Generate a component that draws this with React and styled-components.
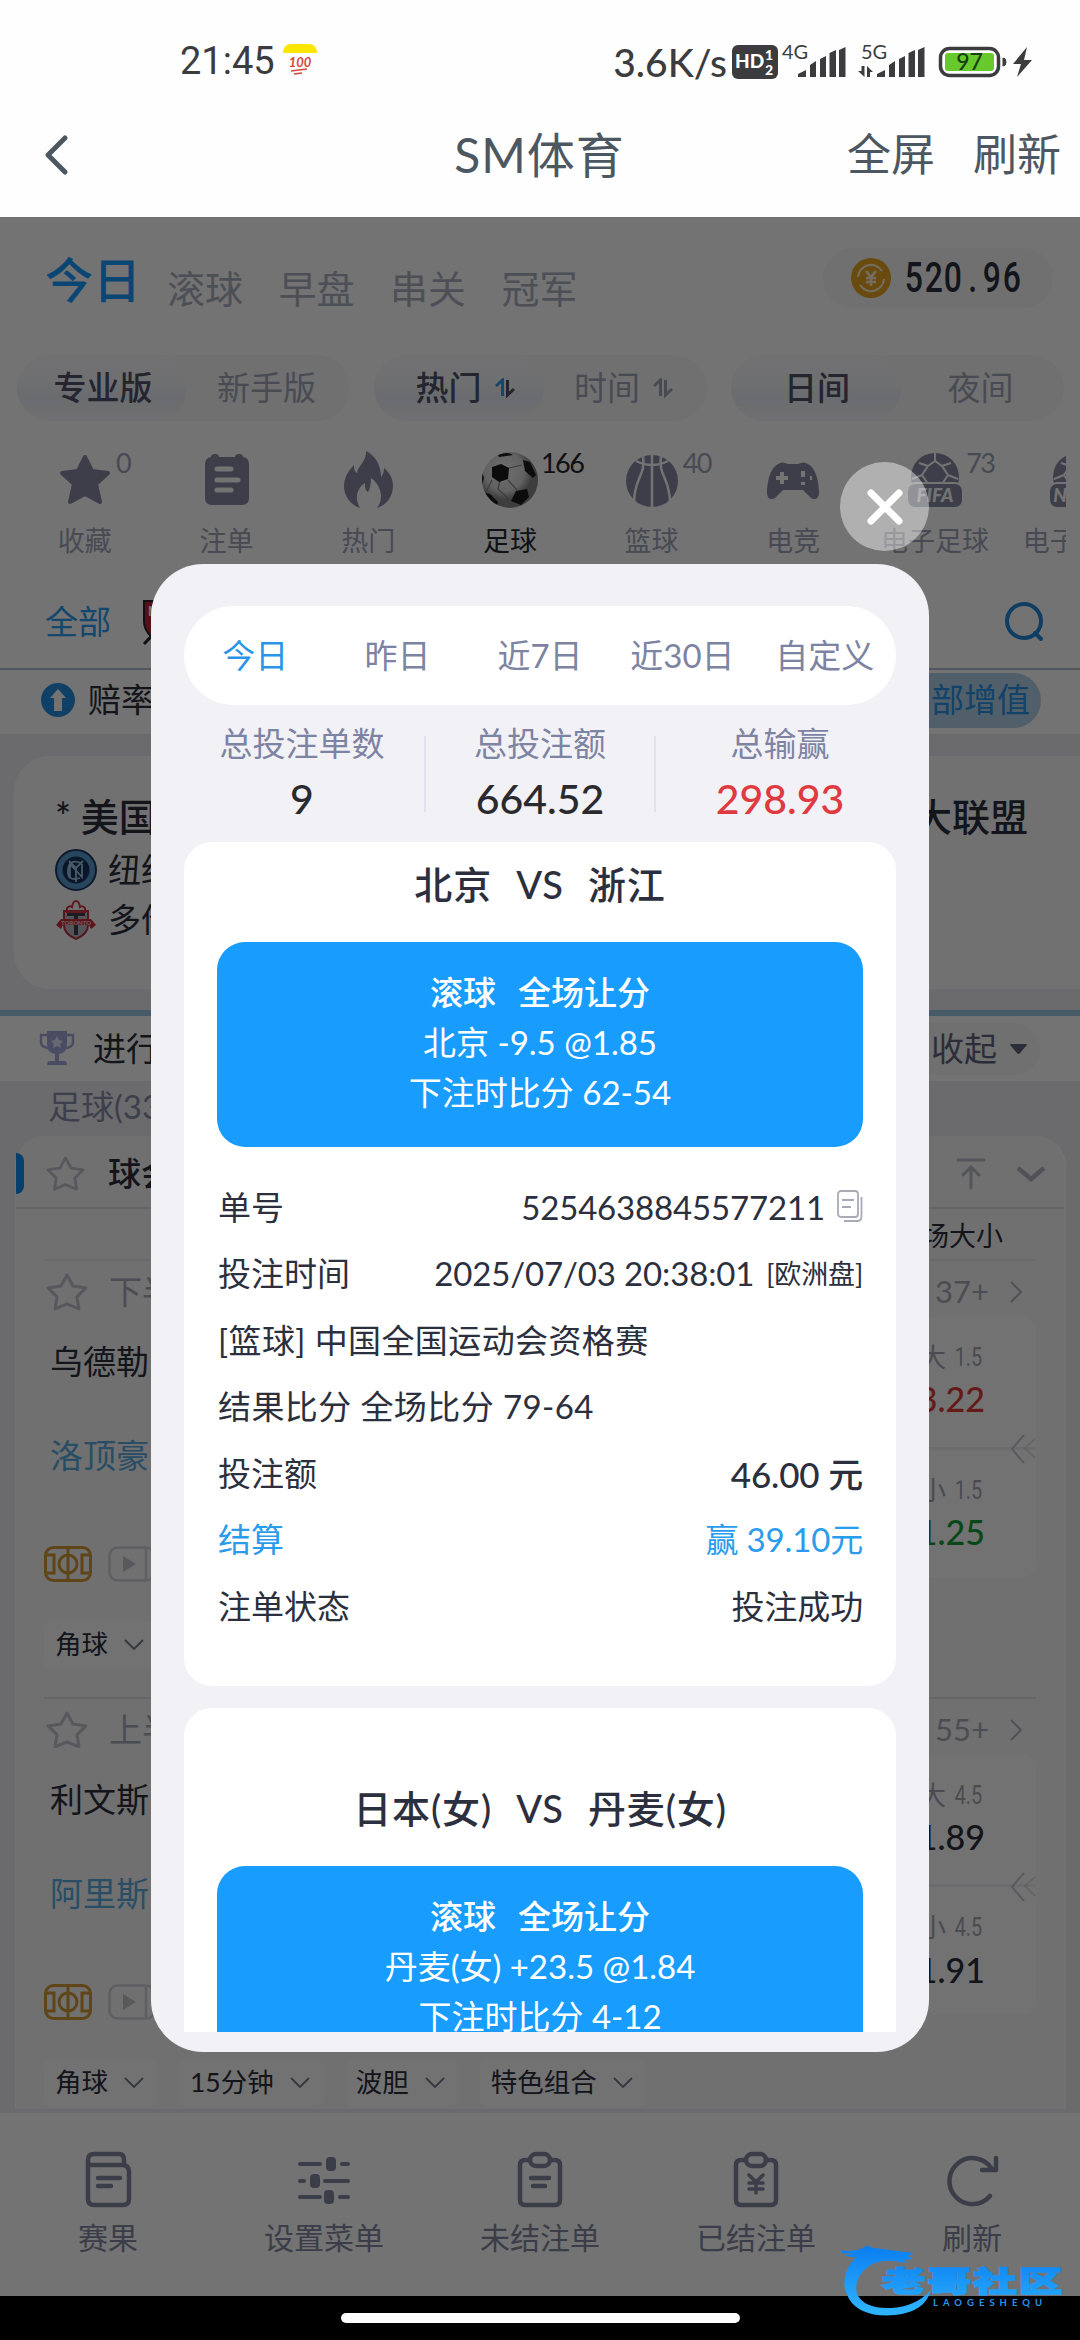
import React from 'react';
import styled, { createGlobalStyle, css } from 'styled-components';

const GlobalStyle = createGlobalStyle`
  * {
    box-sizing: border-box;
  }

  body {
    margin: 0;
    background: #000;
    font-family: Lato, 'Noto Sans CJK SC', sans-serif;
    font-size: 33px;
    line-height: 1.2;
    color: #2c2f3d;
  }
`;

const Screen = styled.div`
  position: relative;
  display: flex;
  flex-direction: column;
  width: 1080px;
  height: 2340px;
  overflow: hidden;
  white-space: nowrap;
`;

// Status bar and title bar
const StatusBar = styled.div`
  display: flex;
  align-items: center;
  justify-content: space-between;
  height: 108px;
  padding: 16px 47px 0 180px;
  background: #fefefe;
  color: #3c3c3e;
  font-size: 39px;
  font-weight: 500;
`;

const StatusGroup = styled.div`
  display: flex;
  align-items: center;
`;

const Clock = styled.span`
  font-family: Roboto, sans-serif;
  font-size: 38px;
  font-weight: 400;
`;

const TitleBar = styled.div`
  display: grid;
  grid-template-columns: 1fr auto 1fr;
  align-items: center;
  height: 109px;
  padding: 0 19px 16px 18px;
  background: #fefefe;
  color: #4d5761;
`;

const PageTitle = styled.div`
  font-size: 48px;
  letter-spacing: 1px;
`;

const TitleActions = styled.div`
  display: flex;
  justify-content: flex-end;
  gap: 38px;
  font-size: 44px;
`;

// Main page
const Page = styled.div`
  display: flex;
  flex-direction: column;
  height: 2079px;
  background: #fff;
`;

const TopTabs = styled.div`
  display: flex;
  align-items: center;
  height: 126px;
  padding: 0 27px 0 45px;
`;

const TopTab = styled.div`
  margin-right: 35.5px;
  padding-top: 18px;
  font-size: 38px;
  color: #acb0c2;

  ${({ $active }) =>
    $active &&
    css`
      margin-right: 26px;
      padding-top: 0;
      font-size: 48px;
      font-weight: 500;
      color: #179cff;
    `}
`;

const Balance = styled.div`
  display: flex;
  align-items: center;
  width: 230px;
  height: 60px;
  margin: 0 0 4px auto;
  padding-left: 28px;
  border-radius: 30px;
  background: #f9f9fb;
`;

const BalanceDigits = styled.div`
  display: flex;
  margin-left: 13px;
  font-family: Roboto, sans-serif;
  font-size: 42px;
  font-weight: 500;
  color: #2c2f3d;
`;

const Digit = styled.span`
  display: flex;
  justify-content: center;
  width: 19.6px;
  transform: scaleX(0.76);
`;

const Segments = styled.div`
  display: flex;
  gap: 24px;
  height: 91px;
  padding: 12px 16px 13px 17px;
`;

const Segment = styled.div`
  display: flex;
  flex: 1;
  border-radius: 33px;
  background: #f8f8fa;
`;

const SegmentOption = styled.div`
  display: flex;
  flex: 1;
  align-items: center;
  justify-content: center;
  gap: 13px;
  padding-right: 4px;
  border-radius: 33px;
  color: #a2a7b8;

  ${({ $active }) =>
    $active &&
    css`
      flex: 0 0 170px;
      padding-right: 0;
      padding-left: ${({ $sortable }) => ($sortable ? 12 : 2)}px;
      color: #505368;
      font-weight: 500;
      background: linear-gradient(#fbfbfd 0%, #f7f8fb 40%, #eceff8 62%, #f2f3f9 80%, #f9f9fb 100%);
    `}
`;

const Sports = styled.div`
  display: flex;
  width: 1066px;
  height: 128px;
  padding-left: 14px;
  overflow: hidden;
`;

const Sport = styled.div`
  position: relative;
  display: flex;
  flex: none;
  flex-direction: column;
  align-items: center;
  width: 141.7px;
  padding-top: 17px;
  font-size: 27px;
  color: ${({ $active }) => ($active ? '#24262e' : '#a0a4b8')};
`;

const SportCount = styled.span`
  position: absolute;
  left: 102px;
  top: 13px;
  letter-spacing: -1.6px;
`;

const SportLabel = styled.div`
  margin-top: 16px;
`;

const LeagueBar = styled.div`
  display: flex;
  align-items: center;
  height: 108px;
  padding: 14px 35px 0 45px;
  border-bottom: 2px solid #b4bfcf;
  color: #2a9df0;
`;

const MlsLogo = styled.svg`
  margin: 0 auto 0 31px;
`;

const Notice = styled.div`
  display: flex;
  align-items: center;
  height: 64px;
  padding: 0 39px 4px 41px;
`;

const NoticeText = styled.span`
  margin: 0 auto 0 13px;
`;

const BoostPill = styled.div`
  display: flex;
  align-items: center;
  justify-content: flex-end;
  width: 190px;
  height: 55px;
  padding-right: 11px;
  border-radius: 28px;
  background: #b4d2ea;
  color: #2a93e6;
`;

const Body = styled.div`
  display: flex;
  flex: 1;
  flex-direction: column;
  min-height: 0;
  background: #eeeef3;
`;

const PromoCard = styled.div`
  display: flex;
  flex: none;
  flex-direction: column;
  height: 233px;
  margin: 22px 0 0 14px;
  padding: 33px 52px 0 41px;
  border-radius: 36px 0 0 36px;
  background: #fbfbfc;
`;

const PromoTitle = styled.div`
  display: flex;
  align-items: center;
  justify-content: space-between;
  height: 56px;
  font-size: 38px;
  font-weight: 500;
`;

const PromoTeam = styled.div`
  display: flex;
  align-items: center;
  gap: 11px;
  height: 50px;
`;

const LiveBar = styled.div`
  display: flex;
  flex: none;
  align-items: center;
  height: 71px;
  margin-top: 21px;
  padding: 0 40px 0 39px;
  border-top: 6px solid #9cc8e6;
  background: #fff;
`;

const LiveText = styled.span`
  margin: 0 auto 0 18px;
`;

const CollapsePill = styled.div`
  display: flex;
  align-items: center;
  gap: 12px;
  height: 52px;
  padding: 0 12px 0 40px;
  border-radius: 26px;
  background: #f8f8fa;
  color: #60647c;
`;

const GroupTitle = styled.div`
  display: flex;
  flex: none;
  align-items: center;
  height: 55px;
  padding: 0 0 4px 48px;
  color: #888ca8;
`;

const MatchCard = styled.div`
  display: flex;
  flex: none;
  flex-direction: column;
  height: 973px;
  margin: 0 14px 0 15px;
  border-left: 1px solid #fdfdff;
  border-right: 2px solid #fdfdff;
  border-radius: 30px 30px 0 0;
  background: #f8f8f9;
`;

const MatchCardHead = styled.div`
  display: flex;
  flex: none;
  align-items: center;
  height: 73px;
  padding: 4px 18px 0 0;
  border-bottom: 2px solid #e2e2e8;
  font-weight: 500;
`;

const LeagueMark = styled.div`
  width: 8px;
  height: 41px;
  margin-right: 22px;
  border-radius: 0 8px 8px 0;
  background: #0d8df0;
`;

const LeagueName = styled.span`
  margin: 0 auto 0 23px;
`;

const HeadIcons = styled.div`
  display: flex;
  align-items: center;
  gap: 30px;
`;

const ColumnTitle = styled.div`
  flex: none;
  height: 52px;
  margin: 0 28px;
  padding: 11px 33px 0 0;
  border-bottom: 2px solid #e8e8ee;
  font-size: 27px;
  line-height: 32px;
  text-align: right;
`;

const Match = styled.div`
  display: flex;
  flex: none;
  flex-direction: column;
  height: 435.5px;
  margin: 0 28px;

  & + & {
    border-top: 2px solid #e2e2e8;
  }
`;

const MatchHead = styled.div`
  display: flex;
  align-items: center;
  height: 56px;
  padding: 6px 14px 0 2px;
  color: #a8abb8;
`;

const MatchPeriod = styled.span`
  margin: 0 auto 0 21px;
`;

const MoreCount = styled.span`
  margin-right: 21px;
  font-size: 31px;
`;

const MatchBody = styled.div`
  display: flex;
  flex: none;
  justify-content: space-between;
  height: 304px;
`;

const Teams = styled.div`
  display: flex;
  flex-direction: column;
  padding: 25px 0 0 6px;
`;

const Team = styled.div`
  height: 94px;
  color: ${({ $away }) => ($away ? '#5cacdf' : '#2c2f3d')};
`;

const MediaIcons = styled.div`
  display: flex;
  gap: 16px;
  margin-left: -6px;
  padding-top: 16px;
`;

const OddsBox = styled.div`
  position: relative;
  display: flex;
  flex-direction: column;
  width: 170px;
  height: 260px;
  border-radius: 14px;
  background: #fdfdfe;
`;

const Odds = styled.div`
  display: flex;
  flex-direction: column;
  align-items: flex-end;
  height: 131px;
  padding: 25px 51px 0 0;
  color: #a3a6b4;
  font-size: 26px;

  & + & {
    border-top: 3px solid #efeff3;
  }
`;

const OddsLine = styled.span`
  display: flex;
  margin-right: 3px;
`;

const OddsLimit = styled.span`
  font-family: Roboto, sans-serif;
  transform: scaleX(0.76);
  transform-origin: right;
`;

const OddsValue = styled.span`
  margin-top: 6px;
  font-size: 34px;
  font-weight: 500;
  color: ${({ $color }) => $color || '#2c2f3d'};
`;

const SwipeHint = styled.svg`
  position: absolute;
  right: 0;
  top: 116px;
`;

const Chips = styled.div`
  display: flex;
  gap: 22px;
`;

const Chip = styled.div`
  display: flex;
  align-items: center;
  gap: 16px;
  height: 48px;
  padding: 0 13px 0 11px;
  border-radius: 8px;
  background: #fdfdfe;
  font-size: 26.5px;
`;

const BottomNav = styled.div`
  display: flex;
  flex: none;
  height: 183px;
  background: #fff;
`;

const NavItem = styled.div`
  display: flex;
  flex: 1;
  flex-direction: column;
  align-items: center;
  gap: 10px;
  padding-top: 38px;
  font-size: 30px;
  color: #84889f;
`;

const HomeBar = styled.div`
  display: flex;
  align-items: center;
  justify-content: center;
  height: 44px;
  background: #000;
`;

const HomeIndicator = styled.div`
  width: 399px;
  height: 10px;
  border-radius: 5px;
  background: #fff;
`;

// Dialog
const Overlay = styled.div`
  position: absolute;
  inset: 217px 0 44px;
  background: rgba(0, 0, 0, 0.55);
`;

const CloseButton = styled.button`
  position: absolute;
  left: 840px;
  top: 462px;
  display: flex;
  align-items: center;
  justify-content: center;
  width: 89px;
  height: 89px;
  padding: 0;
  border: 0;
  border-radius: 50%;
  background: rgba(255, 255, 255, 0.44);
`;

const Dialog = styled.div`
  position: absolute;
  left: 151px;
  top: 564px;
  display: flex;
  flex-direction: column;
  width: 778px;
  height: 1488px;
  padding: 42px 33px 20px;
  border-radius: 52px;
  background: #f1f1f6;
`;

const RangeTabs = styled.div`
  display: flex;
  flex: none;
  height: 99px;
  border-radius: 50px;
  background: #fff;
`;

const RangeTab = styled.div`
  display: flex;
  flex: 1;
  align-items: center;
  justify-content: center;
  color: ${({ $active }) => ($active ? '#2a95e8' : '#7d83a3')};
`;

const Stats = styled.div`
  display: grid;
  flex: none;
  grid-template-columns: 240px 230px 242px;
  align-items: center;
  height: 137px;
`;

const Stat = styled.div`
  display: flex;
  flex-direction: column;
  align-items: center;
  justify-content: center;
  gap: 11px;
  height: 76px;

  & + & {
    border-left: 2px solid #e2e2ee;
  }

  &:first-child {
    padding-right: 4px;
  }

  &:last-child {
    padding-left: 8px;
  }
`;

const StatLabel = styled.div`
  color: #7d83a3;
`;

const StatValue = styled.div`
  font-size: 41px;
  font-weight: 500;
  color: ${({ $color }) => $color || '#2a2a2e'};
`;

const BetList = styled.div`
  display: flex;
  flex: 1;
  flex-direction: column;
  gap: 22px;
  min-height: 0;
  overflow: hidden;
`;

const BetCard = styled.div`
  flex: none;
  height: 844px;
  padding: ${({ $spaced }) => ($spaced ? 58 : 0)}px 33px 0;
  border-radius: 28px;
  background: #fff;
`;

const BetTitle = styled.div`
  display: flex;
  align-items: center;
  justify-content: center;
  gap: 24px;
  height: 100px;
  padding-bottom: 14px;
  font-size: 38px;
  font-weight: 500;
  letter-spacing: 0.9px;
`;

const Pick = styled.div`
  display: flex;
  flex-direction: column;
  align-items: center;
  height: 205px;
  padding-top: 25px;
  border-radius: 28px;
  background: #189dff;
  color: #fff;
  line-height: 50px;
`;

const PickHead = styled.div`
  display: flex;
  gap: 22px;
  font-weight: 500;
`;

const Rows = styled.div`
  padding: 27px 0 0 1px;
`;

const Row = styled.div`
  display: flex;
  align-items: center;
  justify-content: space-between;
  height: 66.6px;
  letter-spacing: ${({ $wide }) => ($wide ? 0.4 : 0)}px;
  color: ${({ $win }) => ($win ? '#2a9ceb' : 'inherit')};
`;

const RowValue = styled.span`
  display: flex;
  align-items: center;
  gap: 12px;
  font-size: ${({ $strong }) => ($strong ? 35 : 33)}px;
  font-weight: ${({ $strong }) => ($strong ? 500 : 400)};
  letter-spacing: -0.15px;
`;

const Market = styled.span`
  font-size: 27px;
`;

const Watermark = styled.svg`
  position: absolute;
  left: 830px;
  top: 2230px;
`;

const SignalBars = ({ data }) => (
  <svg width="67" height="50" viewBox="0 0 67 50" fill="#3c3c3e">
    <text x="3" y="22" fontSize="20" fontFamily="Lato, sans-serif" fontWeight="400">
      {data ? '5G' : '4G'}
    </text>
    <path d="M19 40v-3l8-4v7zM31 40V28l6-4v16zM41 40V22l6-3v21zM50.500 40V16l6.500-3v27zM60 40V13l6.500-3v30z" />
    {data && <path d="M0 34h3.500V29h3v11zM9 40V29l6 6h-3v5z" />}
  </svg>
);

const BackIcon = () => (
  <svg width="52" height="44" viewBox="-24 0 52 44" fill="none" stroke="#4d5761" strokeWidth="5" strokeLinecap="round" strokeLinejoin="round">
    <path d="M23 5 6 22l17 17" />
  </svg>
);

const SortIcon = ({ active }) => (
  <svg width="20" height="20" viewBox="0 0 20 20" fill="none" strokeWidth="3">
    <path d="M1 8 7.500 2v16" stroke={active ? '#2a9df0' : '#a2a7b8'} />
    <path d="M12.500 2v15L19 11" stroke={active ? '#505368' : '#a2a7b8'} />
  </svg>
);

const CoinIcon = () => (
  <svg width="40" height="40" viewBox="0 0 40 40">
    <circle cx="20" cy="20" r="20" fill="#e8a623" />
    <g fill="none" stroke="#fff3d6" strokeWidth="2">
      <path d="M7 19a13 13 0 0 1 24-6M33 21a13 13 0 0 1-24 6" />
      <path d="m15 13 5 6 5-6M20 19v9M15 20h10M15 24h10" strokeWidth="2.600" />
    </g>
  </svg>
);

const sportColor = '#888ba4';

const SportIcon = ({ type }) => (
  <svg width="58" height="58" viewBox="0 0 58 58" fill={sportColor}>
    {type === 'star' && (
      <path stroke={sportColor} strokeWidth="4" strokeLinejoin="round" d="m29 6 7 14 16 2-12 11 4 18-15-8-15 8 4-18L6 22l16-2z" />
    )}
    {type === 'orders' && (
      <>
        <path d="M13 6q0-3 4-3t4 3h16q0-3 4-3t4 3q6 1 6 7v34q0 7-7 7H14q-7 0-7-7V13q0-6 6-7z" />
        <path d="M19 18h14M19 29h21M19 39h14" stroke="#fff" strokeWidth="5" strokeLinecap="round" />
      </>
    )}
    {type === 'fire' && (
      <path d="M27 0c1 10-9 16-9 22-3-2-3-5-3-8C8 21 5 28 5 35c0 11 7 19 16 22-6-10-3-20 5-25 0 4 0 7 3 9 2-3 3-8 3-14 9 6 14 20 6 30 10-3 16-12 16-22 0-8-4-14-9-18 0 4-1 7-3 9C42 15 37 5 27 0z" />
    )}
    {type === 'football' && (
      <>
        <defs>
          <radialGradient id="ball" cx="40%" cy="35%">
            <stop offset="0" stopColor="#f6f6f6" />
            <stop offset="0.7" stopColor="#d8d8d8" />
            <stop offset="1" stopColor="#888" />
          </radialGradient>
          <clipPath id="ballClip">
            <circle cx="29" cy="29" r="28" />
          </clipPath>
        </defs>
        <circle cx="29" cy="29" r="28" fill="url(#ball)" />
        <g clipPath="url(#ballClip)">
          <g fill="none" stroke="#888" strokeWidth="1.200">
            <path d="M27 29l9 10M28 17l13-3M51 24l3 14-8 4M11 29l-6 12M19 30l-2 8 12 11" />
          </g>
          <path fill="#1b1b1b" d="m11 16 9-3 8 4-1 11-9 3-7-5zM42 9l7 2 6 13-3 3-8-7zM35 40l11-2 2 8-8 8-10-4zM4 42l5 1 8 8-1 6zM17 4q10-4 15 0l-14 2zM1 20l2 7-2 7z" />
        </g>
      </>
    )}
    {type === 'basketball' && (
      <>
        <circle cx="29" cy="30" r="26" />
        <g fill="none" stroke="#fff" strokeWidth="2.500">
          <path d="M29 3v54M20 4c3 22-9 22-9 48M38 4c-3 22 9 22 9 48M13 10q16 8 32 0" />
        </g>
      </>
    )}
    {type === 'gamepad' && (
      <>
        <path d="M14 13q4-3 10 0h10q6-3 10 0c8 4 11 18 11 29 0 6-5 8-9 4l-7-7H19l-7 7c-4 4-9 2-9-4 0-11 3-25 11-29z" />
        <path d="M18 21v12M12 27h12M39 20v6M39 31v3M46 27h2" stroke="#fff" strokeWidth="4" />
      </>
    )}
    {(type === 'fifa' || type === 'nba') && (
      <>
        <circle cx="29" cy="26" r="24" />
        <path d="m22 15 7-5 7 5 6 9-6 9H22l-6-9zM29 10V2M16 24 6 28M42 24l10 4M22 15l-9-3M36 15l9-3" fill="none" stroke="#fff" strokeWidth="2" />
        <rect x="1" y="32" width="56" height="25" rx="8" stroke="#fff" strokeWidth="2" />
        <text x={type === 'fifa' ? 29 : 24} y="51" fontSize="19" fontWeight="900" fontStyle="italic" textAnchor="middle" fill="#fff" fontFamily="Lato, sans-serif">
          {type === 'fifa' ? 'FIFA' : 'NBA'}
        </text>
      </>
    )}
  </svg>
);

const StarOutline = ({ size = 42 }) => (
  <svg width={size} height={size * 0.9} viewBox="0 0 42 38" fill="none" stroke="#c0c2ce" strokeWidth="3" strokeLinejoin="round">
    <path d="m21 2 6 11 13 2-9 9 2 12-12-5-12 5 2-12-9-9 13-2z" />
  </svg>
);

const SmallChevron = () => (
  <svg width="20" height="12" viewBox="0 0 20 12" fill="none" stroke="#777b8a" strokeWidth="1.800">
    <path d="m1 1 9 9 9-9" />
  </svg>
);

const PitchIcon = () => (
  <svg width="48" height="36" viewBox="0 0 48 36" fill="none" stroke="#d39a36" strokeWidth="3">
    <rect x="1.500" y="1.500" width="45" height="33" rx="8" />
    <path d="M24 1v34M2 9h8v18H2M46 9h-8v18h8" />
    <circle cx="24" cy="18" r="9" />
  </svg>
);

const VideoIcon = () => (
  <svg width="48" height="36" viewBox="0 0 48 36" fill="none" stroke="#d2d3d9" strokeWidth="2.500">
    <rect x="1.500" y="1.500" width="45" height="33" rx="8" />
    <path d="M38 2v32" />
    <path d="m15 10 13 8-13 8z" fill="#c4c5cc" stroke="none" />
  </svg>
);

const CopyIcon = () => (
  <svg width="26" height="34" viewBox="0 0 26 34" fill="none" stroke="#a8abb5" strokeWidth="1.800">
    <rect x="1" y="1" width="20" height="26" rx="3" />
    <path d="M24.500 7v19q0 5-4 5H7M5 10h12M5 17h9" />
  </svg>
);

const NavIcon = ({ type }) => (
  <svg width="54" height="58" viewBox="0 0 54 58" fill="none" stroke="#84889f" strokeWidth="4.500" strokeLinecap="round" strokeLinejoin="round">
    {type === 'results' && (
      <path d="M7 14V9q0-6 6-6h25q5 0 5 6v5H10q-3 0-3-3v37q0 6 6 6h29q6 0 6-6V21q0-7-7-7M17 27h22M17 35h13" />
    )}
    {type === 'settings' && (
      <>
        <path d="M3 13h20M45 13h6M3 30h4M28 30h23M3 46h20M43 46h8" strokeWidth="4" />
        <g fill="#84889f" stroke="none">
          <rect x="29" y="6" width="10" height="14" rx="4" />
          <rect x="13" y="23" width="10" height="14" rx="4" />
          <rect x="27" y="39" width="10" height="14" rx="4" />
        </g>
      </>
    )}
    {(type === 'open' || type === 'settled') && (
      <>
        <path d="M17 9h-5q-5 0-5 5v35q0 5 5 5h30q5 0 5-5V14q0-5-5-5h-5" />
        <rect x="17" y="3" width="20" height="12" rx="6" />
        {type === 'open' ? <path d="M18 27h18M20 35h12" /> : <path strokeWidth="3.500" d="m20 24 7 7 7-7M27 31v11M20 32h14M20 38h14" />}
      </>
    )}
    {type === 'refresh' && <path d="M45 45A23 23 0 1 1 47 18M51 7v12H37" />}
  </svg>
);

const topTabs = ['今日', '滚球', '早盘', '串关', '冠军'];

const sports = [
  { icon: 'star', label: '收藏', count: '0' },
  { icon: 'orders', label: '注单' },
  { icon: 'fire', label: '热门' },
  { icon: 'football', label: '足球', count: '166', active: true },
  { icon: 'basketball', label: '篮球', count: '40' },
  { icon: 'gamepad', label: '电竞' },
  { icon: 'fifa', label: '电子足球', count: '73' },
  { icon: 'nba', label: '电子篮球' },
];

const matches = [
  {
    period: '下半',
    more: '37+',
    home: '乌德勒',
    away: '洛顶豪',
    line: '1.5',
    over: '3.22',
    under: '1.25',
    overColor: '#e03a3a',
    underColor: '#12a035',
    chips: ['角球'],
  },
  {
    period: '上半',
    more: '55+',
    home: '利文斯',
    away: '阿里斯',
    line: '4.5',
    over: '1.89',
    under: '1.91',
    chips: ['角球', '15分钟', '波胆', '特色组合'],
  },
];

const navItems = [
  { icon: 'results', label: '赛果' },
  { icon: 'settings', label: '设置菜单' },
  { icon: 'open', label: '未结注单' },
  { icon: 'settled', label: '已结注单' },
  { icon: 'refresh', label: '刷新' },
];

const ranges = ['今日', '昨日', '近7日', '近30日', '自定义'];

const Header = () => (
  <>
    <StatusBar>
      <StatusGroup>
        <Clock>21:45</Clock>
        <svg width="46" height="44" viewBox="3 0 46 44">
          <path d="M11 13q0-9 9-9h16q9 0 9 9z" fill="#fbe600" />
          <text x="28" y="27" fontSize="13" fontWeight="700" fontStyle="italic" textAnchor="middle" fill="#d8453a" fontFamily="Lato, sans-serif">
            100
          </text>
          <path d="m19 31 16-2M22 34l8-1" stroke="#d8453a" strokeWidth="1.500" />
        </svg>
      </StatusGroup>
      <StatusGroup>
        <span>3.6K/s</span>
        <svg width="52" height="36" viewBox="0 0 52 36">
          <rect x="5" y="1" width="46" height="34" rx="6" fill="#3c3c3e" />
          <g fill="#fff" fontFamily="Lato, sans-serif" fontWeight="900">
            <text x="8" y="24" fontSize="19">HD</text>
            <text x="38" y="16" fontSize="14">1</text>
            <text x="38" y="31" fontSize="14">2</text>
          </g>
        </svg>
        <SignalBars />
        <svg width="12" height="2" />
        <SignalBars data />
        <svg width="108" height="34" viewBox="0 0 108 34">
          <rect x="15.500" y="3.500" width="58" height="27" rx="9" fill="none" stroke="#3c3c3e" strokeWidth="3.500" />
          <rect x="20" y="8" width="49" height="18" rx="3" fill="#67c92b" />
          <text x="44.500" y="25" fontSize="23" fontWeight="500" textAnchor="middle" fill="#174012" fontFamily="Lato, sans-serif">
            97
          </text>
          <path d="M78 13q3 0 3 4t-3 4z" fill="#3c3c3e" stroke="#3c3c3e" />
          <path d="M102 2 88 19h8l-4 13 15-17h-8z" fill="#3c3c3e" />
        </svg>
      </StatusGroup>
    </StatusBar>
    <TitleBar>
      <BackIcon />
      <PageTitle>SM体育</PageTitle>
      <TitleActions>
        <span>全屏</span>
        <span>刷新</span>
      </TitleActions>
    </TitleBar>
  </>
);

const MatchBlock = ({ match }) => (
  <Match>
    <MatchHead>
      <StarOutline />
      <MatchPeriod>{match.period}</MatchPeriod>
      <MoreCount>{match.more}</MoreCount>
      <svg width="12" height="22" viewBox="0 0 12 22" fill="none" stroke="#b4b6c2" strokeWidth="2">
        <path d="m1 1 10 10L1 21" />
      </svg>
    </MatchHead>
    <MatchBody>
      <Teams>
        <Team>{match.home}</Team>
        <Team $away>{match.away}</Team>
        <MediaIcons>
          <PitchIcon />
          <VideoIcon />
        </MediaIcons>
      </Teams>
      <OddsBox>
        <Odds>
          <OddsLine>
            大<OddsLimit>{match.line}</OddsLimit>
          </OddsLine>
          <OddsValue $color={match.overColor}>{match.over}</OddsValue>
        </Odds>
        <Odds>
          <OddsLine>
            小<OddsLimit>{match.line}</OddsLimit>
          </OddsLine>
          <OddsValue $color={match.underColor}>{match.under}</OddsValue>
        </Odds>
        <SwipeHint width="26" height="32" viewBox="0 0 26 32" fill="none" stroke="#c3c8d2" strokeWidth="2">
          <path d="M14 2 2 16l12 14" />
          <path d="M25 6 15 15l10 10" opacity="0.5" />
        </SwipeHint>
      </OddsBox>
    </MatchBody>
    <Chips>
      {match.chips.map((chip) => (
        <Chip key={chip}>
          {chip}
          <SmallChevron />
        </Chip>
      ))}
    </Chips>
  </Match>
);

const BetPick = ({ line, score }) => (
  <Pick>
    <PickHead>
      <span>滚球</span>
      <span>全场让分</span>
    </PickHead>
    <div>{line}</div>
    <div>下注时比分 {score}</div>
  </Pick>
);

const BetDialog = () => (
  <Dialog>
    <RangeTabs>
      {ranges.map((range, index) => (
        <RangeTab key={range} $active={index === 0}>
          {range}
        </RangeTab>
      ))}
    </RangeTabs>
    <Stats>
      <Stat>
        <StatLabel>总投注单数</StatLabel>
        <StatValue>9</StatValue>
      </Stat>
      <Stat>
        <StatLabel>总投注额</StatLabel>
        <StatValue>664.52</StatValue>
      </Stat>
      <Stat>
        <StatLabel>总输赢</StatLabel>
        <StatValue $color="#e0393f">298.93</StatValue>
      </Stat>
    </Stats>
    <BetList>
      <BetCard>
        <BetTitle>
          <span>北京</span>
          <span>VS</span>
          <span>浙江</span>
        </BetTitle>
        <BetPick line="北京 -9.5 @1.85" score="62-54" />
        <Rows>
          <Row>
            <span>单号</span>
            <RowValue>
              5254638845577211
              <CopyIcon />
            </RowValue>
          </Row>
          <Row>
            <span>投注时间</span>
            <RowValue>
              2025/07/03 20:38:01
              <Market>[欧洲盘]</Market>
            </RowValue>
          </Row>
          <Row $wide>[篮球] 中国全国运动会资格赛</Row>
          <Row $wide>结果比分 全场比分 79-64</Row>
          <Row>
            <span>投注额</span>
            <RowValue $strong>46.00 元</RowValue>
          </Row>
          <Row $win>
            <span>结算</span>
            <RowValue>赢 39.10元</RowValue>
          </Row>
          <Row>
            <span>注单状态</span>
            <RowValue>投注成功</RowValue>
          </Row>
        </Rows>
      </BetCard>
      <BetCard $spaced>
        <BetTitle>
          <span>日本(女)</span>
          <span>VS</span>
          <span>丹麦(女)</span>
        </BetTitle>
        <BetPick line="丹麦(女) +23.5 @1.84" score="4-12" />
      </BetCard>
    </BetList>
  </Dialog>
);

const CommunityLogo = () => (
  <Watermark width="250" height="110" viewBox="0 0 250 110">
    <defs>
      <linearGradient id="logoBlue" x1="0" y1="15" x2="0" y2="80" gradientUnits="userSpaceOnUse">
        <stop offset="0" stopColor="#0a7df0" />
        <stop offset="1" stopColor="#2cb2ff" />
      </linearGradient>
      <linearGradient id="logoText" x1="0" y1="0" x2="0" y2="1">
        <stop offset="0" stopColor="#0f84f2" />
        <stop offset="1" stopColor="#25a6fb" />
      </linearGradient>
    </defs>
    <path
      fill="url(#logoBlue)"
      d="M12 20q14 3 24-4-2-1 8 2l40 5-6 3 5 3-9 1 3 3-14-2q-14-1-24 5-16 12-12 28 7 15 34 14 24-1 40-18-6 22-36 25-34 3-46-16-12-22 7-42-9 0-12-2 6 0 9-2-8 1-11 0z"
    />
    <text
      transform="translate(52 62) scale(1.18 0.76)"
      fill="url(#logoText)"
      stroke="url(#logoText)"
      strokeWidth="2"
      fontSize="37"
      fontWeight="900"
      fontFamily="'Noto Sans CJK SC', sans-serif"
      textLength="153"
    >
      老哥社区
    </text>
    <text x="103" y="76" fill="#2496ee" fontSize="9.500" fontWeight="700" fontFamily="Lato, sans-serif" textLength="109">
      LAOGESHEQU
    </text>
  </Watermark>
);

const App = () => {
  return (
    <>
      <GlobalStyle />
      <Screen>
        <Header />
        <Page>
          <TopTabs>
            {topTabs.map((tab, index) => (
              <TopTab key={tab} $active={index === 0}>
                {tab}
              </TopTab>
            ))}
            <Balance>
              <CoinIcon />
              <BalanceDigits>
                {'520.96'.split('').map((char, index) => (
                  <Digit key={index}>{char}</Digit>
                ))}
              </BalanceDigits>
            </Balance>
          </TopTabs>

          <Segments>
            <Segment>
              <SegmentOption $active>专业版</SegmentOption>
              <SegmentOption>新手版</SegmentOption>
            </Segment>
            <Segment>
              <SegmentOption $active $sortable>
                热门
                <SortIcon active />
              </SegmentOption>
              <SegmentOption>
                时间
                <SortIcon />
              </SegmentOption>
            </Segment>
            <Segment>
              <SegmentOption $active>日间</SegmentOption>
              <SegmentOption>夜间</SegmentOption>
            </Segment>
          </Segments>

          <Sports>
            {sports.map(({ icon, label, count, active }) => (
              <Sport key={icon} $active={active}>
                <SportIcon type={icon} />
                {count && <SportCount>{count}</SportCount>}
                <SportLabel>{label}</SportLabel>
              </Sport>
            ))}
          </Sports>

          <LeagueBar>
            <span>全部</span>
            <MlsLogo width="40" height="46" viewBox="0 0 40 46">
              <path d="M2 2h36v20q0 14-18 22Q2 36 2 22z" fill="#c22438" stroke="#2b2230" strokeWidth="2" />
              <text x="6" y="17" fontSize="13" fontWeight="900" fill="#fff" fontFamily="Lato, sans-serif">
                MLS
              </text>
              <path d="M2 45 20 26" stroke="#20242f" strokeWidth="3" />
            </MlsLogo>
            <svg width="42" height="42" viewBox="0 0 42 42" fill="none" stroke="#2489da" strokeWidth="4" strokeLinecap="round">
              <circle cx="21" cy="20" r="17" />
              <path d="m32 32 6 6" />
            </svg>
          </LeagueBar>

          <Notice>
            <svg width="34" height="34" viewBox="0 0 34 34">
              <circle cx="17" cy="17" r="17" fill="#248fdf" />
              <path d="m17 6 8 9h-4v13h-8V15H9z" fill="#fff" />
            </svg>
            <NoticeText>赔率</NoticeText>
            <BoostPill>部增值</BoostPill>
          </Notice>

          <Body>
            <PromoCard>
              <PromoTitle>
                <span>* 美国</span>
                <span>大联盟</span>
              </PromoTitle>
              <PromoTeam>
                <svg width="42" height="42" viewBox="0 0 42 42">
                  <circle cx="21" cy="21" r="20" fill="#5a9bd0" stroke="#1d3a66" strokeWidth="2" />
                  <circle cx="21" cy="21" r="13.500" fill="#17345f" />
                  <path d="M15 28V15l12 13V15M26 14q-12-5-13 7t12 8M14 12l7 7 7-7M21 19v14" fill="none" stroke="#9fc6e6" strokeWidth="1.800" />
                </svg>
                纽约
              </PromoTeam>
              <PromoTeam>
                <svg width="42" height="42" viewBox="0 0 42 42">
                  <path d="M9 12h24v14q0 9-12 14Q9 35 9 26z" fill="#b9bcc4" stroke="#c23040" strokeWidth="2" />
                  <path d="M12 13h18v4h-7v19h-4V17h-7z" fill="#3f424c" />
                  <path d="M12 9q3-3 5-1 1-6 4-6t4 6q2-2 5 1v4H12z" fill="none" stroke="#d2364a" strokeWidth="2" />
                  <path d="m1 26 5-6h30l5 6-5 4-2-4H8l-2 4z" fill="#cf3042" />
                  <text x="21" y="25.500" fontSize="6" fontWeight="900" textAnchor="middle" fill="#f0c8cc" fontFamily="Lato, sans-serif">
                    TORONTO
                  </text>
                </svg>
                多伦
              </PromoTeam>
            </PromoCard>

            <LiveBar>
              <svg width="36" height="38" viewBox="0 0 36 38" fill="#a3a8dc">
                <path d="M8 1h20v13q0 9-8 10v7h5q3 0 3 4H8q0-4 3-4h5v-7q-8-1-8-10z" />
                <path d="M8 5H2v7q0 5 7 6M28 5h6v7q0 5-7 6" fill="none" stroke="#a3a8dc" strokeWidth="2.500" />
                <path d="m18 6 2 4 4 1-3 3 1 4-4-2-4 2 1-4-3-3 4-1z" fill="#e6e8fa" />
              </svg>
              <LiveText>进行</LiveText>
              <CollapsePill>
                收起
                <svg width="19" height="14" viewBox="0 0 19 14" fill="#60647c">
                  <path d="M2 2h15q2 0 0 2l-6 7q-1.500 2-3 0L2 4Q0 2 2 2z" />
                </svg>
              </CollapsePill>
            </LiveBar>

            <GroupTitle>足球(33</GroupTitle>

            <MatchCard>
              <MatchCardHead>
                <LeagueMark />
                <StarOutline size={39} />
                <LeagueName>球会</LeagueName>
                <HeadIcons>
                  <svg width="30" height="34" viewBox="0 0 30 34" fill="none" stroke="#babcc8" strokeWidth="3" strokeLinecap="round">
                    <path d="M2 3h26M15 31V12M7 18l8-8 8 8" />
                  </svg>
                  <svg width="30" height="20" viewBox="0 0 30 20" fill="none" stroke="#b4b6c2" strokeWidth="4.500">
                    <path d="m2 4 13 11L28 4" />
                  </svg>
                </HeadIcons>
              </MatchCardHead>
              <ColumnTitle>场大小</ColumnTitle>
              {matches.map((match) => (
                <MatchBlock key={match.home} match={match} />
              ))}
            </MatchCard>
          </Body>

          <BottomNav>
            {navItems.map(({ icon, label }) => (
              <NavItem key={icon}>
                <NavIcon type={icon} />
                {label}
              </NavItem>
            ))}
          </BottomNav>
        </Page>
        <HomeBar>
          <HomeIndicator />
        </HomeBar>

        <Overlay />
        <CloseButton aria-label="close">
          <svg width="38" height="38" viewBox="0 0 38 38" stroke="#fff" strokeWidth="7" strokeLinecap="round">
            <path d="m5 5 28 28M33 5 5 33" />
          </svg>
        </CloseButton>
        <BetDialog />
        <CommunityLogo />
      </Screen>
    </>
  );
};

export default App;
